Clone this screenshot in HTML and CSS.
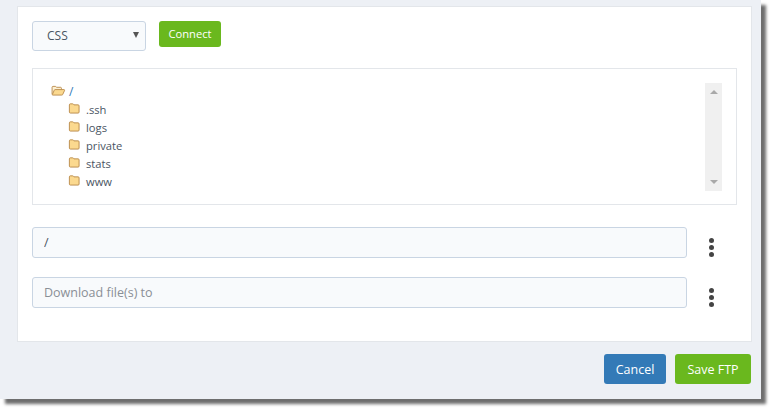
FILE: index.html
```html
<!DOCTYPE html>
<html lang="en">
<head>
    <meta charset="UTF-8">
    <title>FTP</title>
    <link rel="stylesheet" href="styles.css">
</head>
<body>

    <svg class="icon-defs" width="0" height="0">
        <symbol id="folder" viewBox="0 0 13 12">
            <path d="M1.5 10.5V2.6c0-.6.4-1.100 1-1.100h2.600c.5 0 .8.2 1 .6l.3.5h4.600c.6 0 1 .4 1 1v6.900c0 .5-.4 1-1 1h-8.500c-.6 0-1-.5-1-1z" fill="#fbd98f" stroke="#b98a4a"/>
        </symbol>
        <symbol id="folder-open" viewBox="0 0 16 12">
            <path d="M1 10V2.500c0-.6.4-1 1-1h2.500c.5 0 .8.2 1 .6l.3.4h4.400c.6 0 1 .4 1 1V5" fill="#fdf0d2" stroke="#b98a4a"/>
            <path d="M1.200 10.600 3.400 5.600c.2-.4.5-.6.9-.6h9.600c.6 0 1 .5.7 1l-2.100 4.500c-.2.3-.5.5-.9.5H1.600c-.3 0-.5-.2-.4-.4z" fill="#fbd98f" stroke="#b98a4a"/>
        </symbol>
    </svg>

    <div class="window">
        <div class="panel">
            <div class="connect-row">
                <div class="select-box">
                    <span>CSS</span>
                    <span class="select-arrow"></span>
                </div>
                <button class="button button-green button-small">Connect</button>
            </div>

            <div class="tree-box">
                <div class="tree">
                    <div class="tree-item">
                        <svg class="icon-open"><use href="#folder-open"/></svg>
                        <span class="tree-root">/</span>
                    </div>
                    <div class="tree-item tree-child"><svg class="icon-folder"><use href="#folder"/></svg><span>.ssh</span></div>
                    <div class="tree-item tree-child"><svg class="icon-folder"><use href="#folder"/></svg><span>logs</span></div>
                    <div class="tree-item tree-child"><svg class="icon-folder"><use href="#folder"/></svg><span>private</span></div>
                    <div class="tree-item tree-child"><svg class="icon-folder"><use href="#folder"/></svg><span>stats</span></div>
                    <div class="tree-item tree-child"><svg class="icon-folder"><use href="#folder"/></svg><span>www</span></div>
                </div>
                <div class="scrollbar">
                    <span class="arrow-up"></span>
                    <span class="arrow-down"></span>
                </div>
            </div>

            <div class="path-row">
                <input class="path-input" type="text" value="/">
                <div class="dots"><i></i><i></i><i></i></div>
            </div>
            <div class="path-row">
                <input class="path-input" type="text" placeholder="Download file(s) to">
                <div class="dots"><i></i><i></i><i></i></div>
            </div>
        </div>

        <div class="footer">
            <button class="button button-blue">Cancel</button>
            <button class="button button-green button-save">Save FTP</button>
        </div>
    </div>

</body>
</html>
```

FILE: styles.css
```css
html, body {
    height: 414px;
}

body {
    margin: 0;
    overflow: hidden;
    background-color: #fff;
    font-family: "Open Sans", sans-serif;
    font-size: 12px;
    color: #4a5563;
}

.icon-defs {
    display: block;
}

/* Window */
.window {
    width: 761px;
    height: 399px;
    box-sizing: border-box;
    padding: 6px 9px 0 17px;
    background-color: #edf0f5;
    box-shadow: 5px 5px 3px #6e6e6e;
}

.panel {
    height: 336px;
    box-sizing: border-box;
    padding: 14px 14px 0;
    background-color: #fff;
    border: 1px solid #e3e6ea;
}

/* Connect row */
.connect-row {
    display: flex;
    align-items: flex-start;
    gap: 13px;
}

.select-box {
    width: 114px;
    height: 30px;
    box-sizing: border-box;
    padding: 0 6px 2px 14px;
    display: flex;
    align-items: center;
    justify-content: space-between;
    background-color: #f8fafc;
    border: 1px solid #c9d5e3;
    border-radius: 3px;
}

.select-arrow {
    border-top: 6px solid #555;
    border-left: 3px solid transparent;
    border-right: 3px solid transparent;
}

.button {
    width: 62px;
    height: 30px;
    padding: 0;
    border: none;
    border-radius: 3px;
    color: #fff;
    font-family: inherit;
    font-size: 12.5px;
}

.button-small {
    height: 26px;
    padding-bottom: 1px;
    font-size: 11.2px;
}

.button-save {
    width: 76px;
}

.button-green {
    background-color: #6ab81e;
}

.button-blue {
    background-color: #337ab7;
}

/* Tree */
.tree-box {
    height: 137px;
    margin-top: 17px;
    box-sizing: border-box;
    padding: 13px 14px 13px 18px;
    display: flex;
    justify-content: space-between;
    border: 1px solid #e3e6ea;
    font-size: 11.2px;
}

.scrollbar {
    width: 17px;
    height: 108px;
    margin-top: 1px;
    display: flex;
    flex-direction: column;
    justify-content: space-between;
    align-items: center;
    padding: 7px 0;
    box-sizing: border-box;
    background-color: #f0f0f0;
}

.tree-item {
    height: 18px;
    display: flex;
    align-items: center;
}

.tree-root {
    margin-top: 1px;
    color: #337ab7;
    font-size: 12px;
}

.tree-child {
    padding-left: 17px;
}

.icon-open {
    width: 15px;
    height: 11px;
    margin-top: -2px;
    margin-right: 3px;
}

.icon-folder {
    width: 12px;
    height: 12px;
    margin-right: 6px;
    margin-top: -2px;
}

.arrow-up {
    border-bottom: 4px solid #a9a9a9;
    border-left: 4px solid transparent;
    border-right: 4px solid transparent;
}

.arrow-down {
    border-top: 4px solid #a9a9a9;
    border-left: 4px solid transparent;
    border-right: 4px solid transparent;
}

/* Path inputs */
.path-row {
    display: flex;
    align-items: center;
    margin-top: 19px;
}

.tree-box + .path-row {
    margin-top: 22px;
}

.path-input {
    width: 655px;
    height: 31px;
    box-sizing: border-box;
    padding: 0 11px;
    background-color: #f8fafc;
    border: 1px solid #c9d5e3;
    border-radius: 3px;
    font-family: inherit;
    font-size: 12.5px;
    color: #4a5563;
}

.path-input::placeholder {
    color: #8a8f96;
    opacity: 1;
}

.dots {
    margin-left: 21.500px;
    margin-top: 10px;
    display: flex;
    flex-direction: column;
    gap: 2px;
}

.dots i {
    display: block;
    width: 5px;
    height: 5px;
    border-radius: 50%;
    background-color: #444;
}

/* Footer */
.footer {
    display: flex;
    justify-content: flex-end;
    gap: 9px;
    margin-top: 12px;
    padding-right: 1px;
}
```
